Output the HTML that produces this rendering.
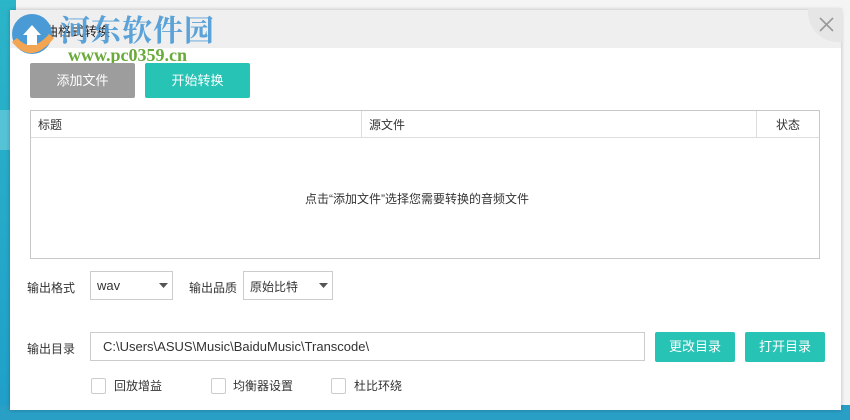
<!DOCTYPE html>
<html><head><meta charset="utf-8"><style>
*{margin:0;padding:0;box-sizing:border-box}
body{width:850px;height:420px;overflow:hidden;position:relative;background:#f4f4f4;font-family:"Liberation Sans","Noto Sans CJK SC",sans-serif;font-size:12px;color:#333}
.abs{position:absolute}
.btn{position:absolute;color:#fff;font-size:13px;text-align:center;border-radius:2px}
.cb{position:absolute;width:15px;height:16px;border:1px solid #ccc;border-radius:2px;background:#fff}
</style></head><body>
<div class="abs" style="left:0;top:0;width:16px;height:420px;background:linear-gradient(#2bb5c8,#1f9fc9)"></div>
<div class="abs" style="left:0;top:405px;width:850px;height:15px;background:#2a9fc6"></div>
<div class="abs" style="left:0;top:110px;width:12px;height:40px;background:#56c2d6"></div>
<div class="abs" style="left:10px;top:10px;width:831px;height:400px;background:#fff;box-shadow:0 0 4px rgba(0,0,0,.25)"></div>
<div class="abs" style="left:10px;top:10px;width:831px;height:38px;background:#efefef"></div>
<div class="abs" style="left:808px;top:8px;width:34px;height:34px;border-radius:0 0 0 30px;background:#e6e6e6"></div>
<svg class="abs" style="left:819px;top:17px" width="15" height="15"><path d="M1 1L14 14M14 1L1 14" stroke="#999" stroke-width="1.6"/></svg>
<div class="abs" style="left:32px;top:21px;font-size:13px;color:#222">歌曲格式转换</div>
<svg class="abs" style="left:4px;top:8px" width="60" height="56"><circle cx="28" cy="26" r="20" fill="#4a9ad6"/><path d="M8 34 Q28 58 50 30 L45 26 Q28 46 13 30Z" fill="#f4a552"/><path d="M19 27 L28 17 L37 27 L33 27 L33 37 L23 37 L23 27Z" fill="#fff"/></svg>
<div class="abs" style="left:60px;top:6px;font-size:30px;font-weight:bold;color:#4a9ad6;letter-spacing:1px;font-family:'Noto Serif CJK SC',serif;opacity:.9">河东软件园</div>
<div class="abs" style="left:68px;top:45px;font-size:18px;font-weight:bold;color:#6aaa3a;font-family:'Liberation Serif',serif">www.pc0359.cn</div>
<div class="btn" style="left:30px;top:63px;width:105px;height:35px;line-height:35px;background:#9d9d9d">添加文件</div>
<div class="btn" style="left:145px;top:63px;width:105px;height:35px;line-height:35px;background:#27c3b5">开始转换</div>
<div class="abs" style="left:30px;top:110px;width:790px;height:149px;border:1px solid #c8c8c8"></div>
<div class="abs" style="left:31px;top:137px;width:788px;height:1px;background:#ddd"></div>
<div class="abs" style="left:361px;top:111px;width:1px;height:26px;background:#ddd"></div>
<div class="abs" style="left:756px;top:111px;width:1px;height:26px;background:#ddd"></div>
<div class="abs" style="left:38px;top:116px">标题</div>
<div class="abs" style="left:369px;top:116px">源文件</div>
<div class="abs" style="left:776px;top:116px">状态</div>
<div class="abs" style="left:305px;top:190px">点击“添加文件”选择您需要转换的音频文件</div>
<div class="abs" style="left:27px;top:279px">输出格式</div>
<div class="abs" style="left:90px;top:271px;width:83px;height:29px;border:1px solid #ccc"></div>
<div class="abs" style="left:97px;top:278px;font-size:13px">wav</div>
<svg class="abs" style="left:159px;top:283px" width="9" height="5"><path d="M0 0H9L4.5 5Z" fill="#555"/></svg>
<div class="abs" style="left:189px;top:279px">输出品质</div>
<div class="abs" style="left:243px;top:271px;width:90px;height:29px;border:1px solid #ccc"></div>
<div class="abs" style="left:250px;top:278px">原始比特</div>
<svg class="abs" style="left:319px;top:283px" width="9" height="5"><path d="M0 0H9L4.5 5Z" fill="#555"/></svg>
<div class="abs" style="left:27px;top:340px">输出目录</div>
<div class="abs" style="left:90px;top:332px;width:555px;height:29px;border:1px solid #ccc"></div>
<div class="abs" style="left:103px;top:339px;font-size:13px">C:\Users\ASUS\Music\BaiduMusic\Transcode\</div>
<div class="btn" style="left:655px;top:332px;width:80px;height:30px;line-height:30px;background:#27c3b5">更改目录</div>
<div class="btn" style="left:745px;top:332px;width:80px;height:30px;line-height:30px;background:#27c3b5">打开目录</div>
<div class="cb" style="left:91px;top:378px"></div><div class="abs" style="left:114px;top:377px">回放增益</div>
<div class="cb" style="left:211px;top:378px"></div><div class="abs" style="left:233px;top:377px">均衡器设置</div>
<div class="cb" style="left:331px;top:378px"></div><div class="abs" style="left:354px;top:377px">杜比环绕</div>
</body></html>
